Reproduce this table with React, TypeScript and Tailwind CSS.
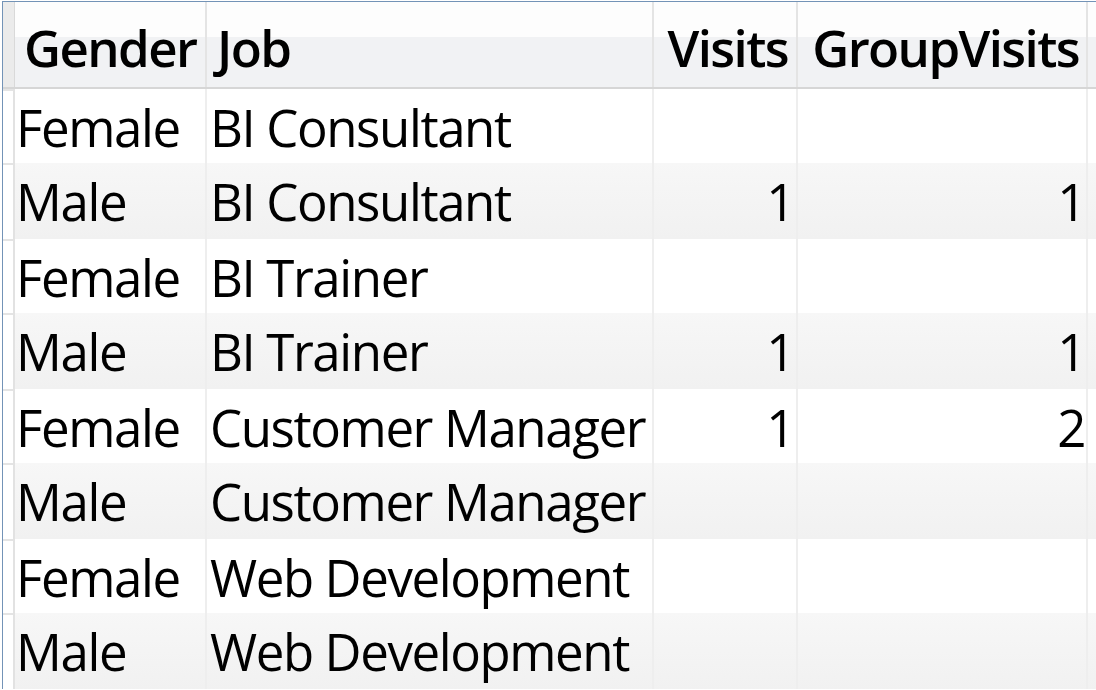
const rows = [
  { gender: "Female", job: "BI Consultant", visits: "", group: "" },
  { gender: "Male", job: "BI Consultant", visits: "1", group: "1" },
  { gender: "Female", job: "BI Trainer", visits: "", group: "" },
  { gender: "Male", job: "BI Trainer", visits: "1", group: "1" },
  { gender: "Female", job: "Customer Manager", visits: "1", group: "2" },
  { gender: "Male", job: "Customer Manager", visits: "", group: "" },
  { gender: "Female", job: "Web Development", visits: "", group: "" },
  { gender: "Male", job: "Web Development", visits: "", group: "" },
];

const font = "font-['Open_Sans','Liberation_Sans',sans-serif]";

export default function App() {
  return (
    <div className={`w-[1096px] h-[690px] overflow-hidden bg-white text-black ${font}`}>
      <div className="ml-[2px] mt-[1px] border-l border-t border-[#7393b7]">
        {/* header */}
        <div className="flex h-[87px] border-b-2 border-[#d6d6d6] bg-[linear-gradient(to_bottom,#fdfdfd_0%,#fdfdfd_41%,#f1f2f4_41%,#f1f2f4_100%)] text-[51px] font-semibold leading-[78px] tracking-[-1.6px]">
          <div className="w-[12px] shrink-0 bg-[#ebebeb] border-r border-[#d9d9d9]" />
          <div className="w-[192px] shrink-0 border-r-2 border-[#e4e4e4] pl-[9px] pt-[6px] whitespace-nowrap overflow-hidden">
            Gender
          </div>
          <div className="w-[447px] shrink-0 border-r-2 border-[#e4e4e4] pl-[10px] pt-[6px] whitespace-nowrap overflow-hidden">
            Job
          </div>
          <div className="w-[144px] shrink-0 border-r-2 border-[#e4e4e4] pr-[8px] pt-[6px] text-right whitespace-nowrap overflow-hidden">
            Visits
          </div>
          <div className="w-[290px] shrink-0 border-r-2 border-[#e4e4e4] pr-[7px] pt-[6px] text-right whitespace-nowrap overflow-hidden">
            GroupVisits
          </div>
          <div className="flex-1" />
        </div>

        {/* rows */}
        {rows.map((r, i) => {
          const odd = i % 2 === 1;
          return (
            <div
              key={i}
              className={`flex text-[51px] leading-[71px] tracking-[-1.4px] ${
                odd ? "h-[76px] bg-[linear-gradient(to_bottom,#f7f7f7,#f1f1f1)]" : "h-[74px] bg-white"
              }`}
            >
              <div className="w-[12px] shrink-0 bg-white border-r-2 border-[#e2e2e2]">
                <div className="h-[2px] bg-[#e4e4e4]" />
              </div>
              <div className="w-[192px] shrink-0 border-r-2 border-[#eeeeee] pl-[1px] pt-[3px] whitespace-nowrap overflow-hidden">
                {r.gender}
              </div>
              <div className="w-[447px] shrink-0 border-r-2 border-[#eeeeee] pl-[3px] pt-[3px] whitespace-nowrap overflow-hidden">
                {r.job}
              </div>
              <div className="w-[144px] shrink-0 border-r-2 border-[#eeeeee] pr-[2px] pt-[3px] text-right whitespace-nowrap overflow-hidden">
                {r.visits}
              </div>
              <div className="w-[290px] shrink-0 border-r-2 border-[#eeeeee] pr-[1px] pt-[3px] text-right whitespace-nowrap overflow-hidden">
                {r.group}
              </div>
              <div className="flex-1" />
            </div>
          );
        })}
      </div>
    </div>
  );
}
